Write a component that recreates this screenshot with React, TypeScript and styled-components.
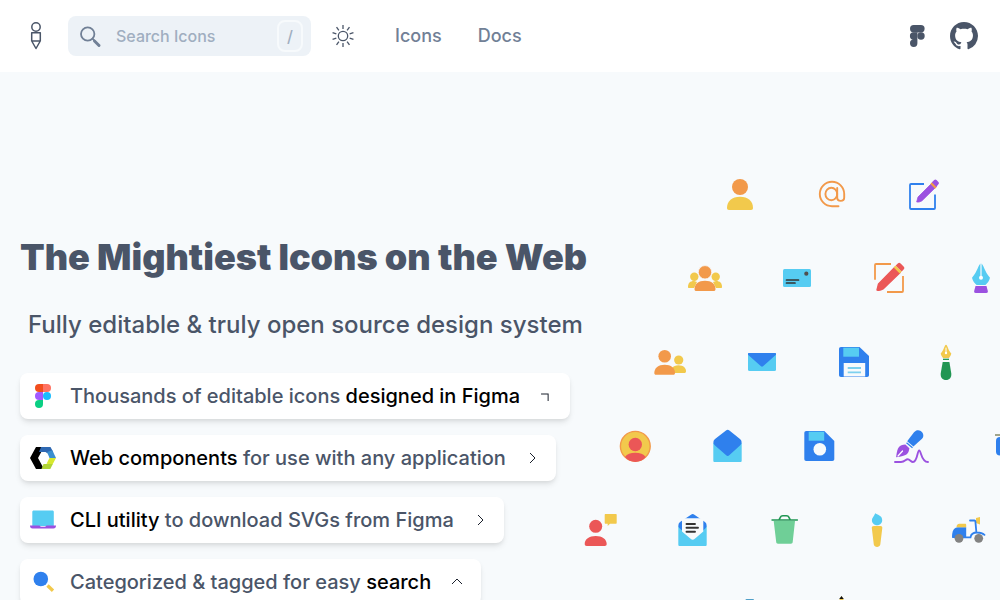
import React from "react";
import styled, { createGlobalStyle } from "styled-components";
import { BsGithub } from "react-icons/bs";

const GlobalStyle = createGlobalStyle`
  *, *::before, *::after { box-sizing: border-box; }
  html { scrollbar-width: none; }
  body {
    margin: 0;
    background: #f7fafc;
    color: #4a5568;
    font-family: Inter, "Liberation Sans", sans-serif;
    font-weight: 500;
  }
`;

const Page = styled.div`
  min-height: 100vh;
  overflow-x: clip;
`;

const Header = styled.header`
  display: flex;
  align-items: center;
  height: 72px;
  padding: 0 22px 0 20px;
  background: #fff;
`;

const IconLink = styled.a`
  display: flex;
  color: #4a5568;
`;

const SearchBox = styled.label`
  display: flex;
  align-items: center;
  width: 243px;
  height: 40px;
  margin-left: 16px;
  padding: 0 8px 0 10px;
  border-radius: 8px;
  background: #edf2f7;
  color: #718096;
`;

const SearchInput = styled.input`
  flex: 1;
  min-width: 0;
  margin-left: 12px;
  padding: 0;
  border: 0;
  outline: 0;
  background: transparent;
  color: #4a5568;
  font: 500 16px/24px Inter, "Liberation Sans", sans-serif;
  &::placeholder { color: #a0aec0; opacity: 1; }
`;

const Key = styled.kbd`
  display: flex;
  align-items: center;
  justify-content: center;
  width: 26px;
  height: 32px;
  border: 2px solid #f7fafc;
  border-radius: 8px;
  color: #a0aec0;
  font: 500 16px/24px Inter, "Liberation Sans", sans-serif;
`;

const ThemeButton = styled.button`
  display: flex;
  margin: 0 0 0 20px;
  padding: 0;
  border: 0;
  background: none;
  color: #4a5568;
  cursor: pointer;
`;

const Nav = styled.nav`
  display: flex;
  gap: 36px;
  margin-left: 40px;
`;

const NavLink = styled.a`
  color: #718096;
  font-size: 18px;
  line-height: 28px;
  text-decoration: none;
`;

const Social = styled.div`
  display: flex;
  align-items: center;
  gap: 20px;
  margin-left: auto;
`;

const Main = styled.main`
  display: flex;
  align-items: flex-start;
`;

const Hero = styled.section`
  flex: 0 0 562px;
  min-width: 0;
  padding: 165px 0 40px;
  margin-left: 20px;
  white-space: nowrap;
`;

const Title = styled.h1`
  margin: 0;
  font-size: 36px;
  font-weight: 900;
  line-height: 40px;
`;

const Subtitle = styled.p`
  margin: 32px 0;
  padding-left: 8px;
  font-size: 24px;
  line-height: 32px;
`;

const Features = styled.ul`
  display: flex;
  flex-direction: column;
  align-items: flex-start;
  gap: 16px;
  margin: 0;
  padding: 0;
  list-style: none;
`;

const Feature = styled.a`
  display: flex;
  align-items: center;
  gap: 14px;
  height: 46px;
  padding: 0 12px 0 10px;
  border-radius: 8px;
  background: #fff;
  box-shadow: 0 4px 6px -1px rgba(0, 0, 0, 0.1), 0 2px 4px -1px rgba(0, 0, 0, 0.06);
  color: #4a5568;
  font-size: 20px;
  line-height: 28px;
  text-decoration: none;
`;

const Strong = styled.strong`
  color: #000;
  font-weight: 500;
`;

const Chevron = styled.svg<{ $turn: number }>`
  transform: rotate(${(p) => p.$turn}deg);
`;

const Wall = styled.section`
  display: flex;
  flex: 1;
  flex-direction: column;
  gap: 48px;
  min-width: 0;
  padding-top: 104px;
`;

const WallRow = styled.div<{ $indent: number }>`
  display: flex;
  gap: 56px;
  padding-left: ${(p) => p.$indent}px;
`;

const Glyph = styled.svg`
  flex: none;
  width: 36px;
  height: 36px;
  overflow: visible;
`;

const orange = "#f2994a";
const yellow = "#f2c94c";
const red = "#eb5757";
const blue = "#2f80ed";
const sky = "#56ccf2";
const purple = "#9b51e0";

const wall: { indent: number; icons: React.ReactNode[] }[] = [
  {
    indent: 140,
    icons: [
      <>
        <circle cx="18" cy="11" r="8" fill={orange} />
        <path d="M5 32c0-7 5-11.300 13-11.300S31 25 31 32c0 1.300-.7 2-2 2H7c-1.300 0-2-.7-2-2z" fill={yellow} />
      </>,
      <g fill="none" stroke={orange} strokeWidth="1.900" strokeLinecap="round">
        <path d="M24.500 30.200H18A12.200 12.200 0 1 1 30.200 18v3.500c0 4.500-7 4.500-7 0V12" />
        <ellipse cx="17.300" cy="18" rx="5.900" ry="6.300" />
      </g>,
      <>
        <path d="M18 8H5c-.7 0-1 .3-1 1v23c0 .7.3 1 1 1h23c.7 0 1-.3 1-1V18.500" fill="none" stroke={blue} strokeWidth="1.800" />
        <path d="M10.700 26l1.300-5L26.500 6.500l4 4L16 24.700c-2 1.300-3.500 1.500-5.300 1.300z" fill={purple} stroke={purple} strokeWidth=".8" strokeLinejoin="round" />
        <path d="M24.300 7.900l4.800 4.800 1.600-1.600-4.800-4.800z" fill={orange} />
        <path d="M25.900 6.300l2.300-2.300c.9-.9 1.700-.6 2.300 0l1.900 1.900c.7.7.7 1.600 0 2.300l-2 2.600z" fill={purple} />
      </>,
    ],
  },
  {
    indent: 105,
    icons: [
      <>
        <g fill={yellow}>
          <circle cx="7.300" cy="16.700" r="4.200" />
          <circle cx="28.700" cy="16.700" r="4.200" />
          <path d="M1 27c0-4 2-6 6-6l3 1-3 6H2c-.7 0-1-.3-1-1zM35 27c0-4-2-6-6-6l-3 1 3 6h5c.7 0 1-.3 1-1z" />
        </g>
        <circle cx="18" cy="12.300" r="6.700" fill={orange} stroke="#f7fafc" strokeWidth=".8" />
        <path d="M7.500 29c0-5 4-8.300 10.500-8.300S28.500 24 28.500 29c0 1.400-.6 2-2 2h-17c-1.400 0-2-.6-2-2z" fill={orange} />
      </>,
      <>
        <rect x="4" y="9" width="28" height="18" rx="1.500" fill={sky} />
        <circle cx="27.300" cy="13.700" r="2.100" fill="#4f4f4f" />
        <path d="M7.500 20h12M7.500 23h8.500" stroke="#333" strokeWidth="1.700" strokeLinecap="round" />
      </>,
      <>
        <path d="M4 19.700V5c0-.7.3-1 1-1h15M32 16v15c0 .7-.3 1-1 1H16" fill="none" stroke={orange} strokeWidth="1.800" />
        <path d="M6 30l1.500-6L23.900 7.200l5.200 5.200-17.100 16.600c-2.200 1.300-4 1.500-6 1z" fill={red} stroke={red} strokeWidth="1.400" strokeLinejoin="round" />
        <path d="M22.700 7.600l6 6 2-2-6-6z" fill={yellow} />
        <path d="M24.700 5.600l2.100-2.100c1-1 1.800-1 2.800 0l3 3c1 1 1 1.900 0 2.900l-1.900 2.200z" fill={red} />
      </>,
      <>
        <path d="M18 3.700c2.600 0 3.300 7.800 9 14-.8 3.300-2.500 5.300-4.600 7.300h-8.800c-2.100-2-3.800-4-4.600-7.300 5.700-6.200 6.400-14 9-14z" fill={sky} />
        <path d="M18 4v13" stroke="#f7fafc" strokeWidth="1.200" />
        <circle cx="18" cy="17.700" r="2" fill="#fff" />
        <path d="M12.500 26h11l1.300 5c.3 1.300-.3 2-1.500 2H12.700c-1.200 0-1.800-.7-1.500-2z" fill={purple} />
      </>,
    ],
  },
  {
    indent: 70,
    icons: [
      <>
        <circle cx="26.700" cy="16" r="4.600" fill={yellow} />
        <path d="M20 29v-5c1.500-2 3.500-2.800 6.500-2.800 5 0 7.500 2.800 7.500 6 0 1.200-.6 1.800-1.800 1.800z" fill={yellow} />
        <circle cx="12.700" cy="12.300" r="6.300" fill={orange} />
        <path d="M2.300 29c0-5 4-8.300 10.400-8.300S23 24 23 29c0 1.200-.6 1.800-1.800 1.800H4.100c-1.200 0-1.800-.6-1.800-1.800z" fill={orange} />
      </>,
      <>
        <rect x="4" y="9" width="28" height="18" rx="1.500" fill={sky} />
        <path d="M4 10c0-.6.4-1 1-1h26c.6 0 1 .4 1 1v.8L19 22.200c-.7.6-1.300.6-2 0L4 10.800z" fill={blue} />
      </>,
      <>
        <path d="M5 3h18.500L33 12v19c0 1.300-.7 2-2 2H5c-1.300 0-2-.7-2-2V5c0-1.300.7-2 2-2z" fill={blue} />
        <rect x="7.300" y="3.700" width="15.700" height="9" fill={sky} />
        <rect x="7.700" y="19" width="21.500" height="13.500" fill="#f7fafc" />
        <path d="M11.700 24H25M11.700 28.300H25" stroke="#7dd0ee" strokeWidth="1.800" />
      </>,
      <>
        <path d="M18 .7c1.500 0 1.700 4.600 5.300 8.800-.2 2-1.500 3-2.300 4.500h-6c-.8-1.500-2.100-2.500-2.300-4.500C16.300 5.300 16.500.7 18 .7z" fill={yellow} />
        <path d="M18 4v5" stroke="#fff" strokeWidth="1" strokeLinecap="round" />
        <circle cx="18" cy="9" r="1.200" fill="#fff" />
        <path d="M15 15.300h6" stroke="#219653" strokeWidth="1.300" />
        <path d="M14.700 18h6.700l1.900 11.500v1.300c0 7-10.600 7-10.600 0v-1.300z" fill="#219653" />
      </>,
    ],
  },
  {
    indent: 35,
    icons: [
      <>
        <circle cx="18.300" cy="18.300" r="14.900" fill={yellow} stroke={orange} strokeWidth="1.400" />
        <circle cx="18.300" cy="16.500" r="6.700" fill={red} />
        <path d="M8 29c2-3 5.500-4.300 10.300-4.300S26.600 26 28.700 29c-5.700 6.500-15 6.500-20.700 0z" fill={red} />
      </>,
      <>
        <path d="M4.300 15h28.400v17.500c0 1-.5 1.500-1.500 1.500H5.800c-1 0-1.500-.5-1.500-1.500z" fill={sky} />
        <path d="M17 2.500c1.200-.9 2.200-.9 3.400 0L31 11c2.200 1.800 2.200 4.600 0 6.400L20.500 27c-1.200 1.200-2.400 1.200-3.600 0L6 17.400c-2.200-1.800-2.200-4.600 0-6.400z" fill={blue} />
      </>,
      <>
        <path d="M5.300 3h18L33.300 13v18c0 1.300-.7 2-2 2h-26c-1.300 0-2-.7-2-2V5c0-1.300.7-2 2-2z" fill={blue} />
        <rect x="7.700" y="3.700" width="15.500" height="9" fill={sky} />
        <circle cx="18.800" cy="21.300" r="6.300" fill="#f7fafc" />
      </>,
      <>
        <path d="M14.200 13.200L21 4.300c4.500-5.700 12.500 1.200 8 6.500l-8.600 7.800z" fill={blue} />
        <path d="M13.500 14.800l6 5" stroke={blue} strokeWidth="1.300" />
        <path d="M12.400 16.500l4 3.700c-1 6-2.400 7.500-13.300 9 1.200-10.500 3-12 9.300-12.700z" fill={purple} />
        <path d="M5 28l4.500-5" stroke="#fff" strokeWidth="1.200" strokeLinecap="round" />
        <path d="M2 34h6c4 0 4.500-2.700 6.700-2.700S18 34 20 34c4.500 0 4.200-11.500 6.200-11.500S28 34 35 34" fill="none" stroke={purple} strokeWidth="1.900" strokeLinecap="round" />
      </>,
      <>
        <path d="M10 7h20" stroke="#8a8f70" strokeWidth="1.600" />
        <rect x="11" y="9" width="20" height="18.500" rx="4" fill={blue} />
      </>,
    ],
  },
  {
    indent: 0,
    icons: [
      <>
        <circle cx="13.700" cy="14.300" r="6.500" fill={red} />
        <path d="M2.700 32c0-5 4.500-8 11-8s11 3 11 8c0 1.300-.7 2-2 2h-18c-1.300 0-2-.7-2-2z" fill={red} />
        <path d="M23.700 2h10c.7 0 1 .3 1 1v7.700c0 .7-.3 1-1 1H28l-2.300 2.200v-2.200h-2c-.7 0-1-.3-1-1V3c0-.7.3-1 1-1z" fill={yellow} />
      </>,
      <>
        <path d="M4.300 14h28.400v18.500c0 1-.5 1.500-1.500 1.500H5.800c-1 0-1.500-.5-1.500-1.500z" fill={sky} />
        <path d="M17 2.700c1.200-.9 2.200-.9 3.400 0L31 10c2.200 1.800 2.200 5 0 6.800L19 27 6 16.800c-2.200-1.800-2.200-5 0-6.800z" fill={blue} />
        <path d="M8 8c0-1.200.6-1.800 1.800-1.800h17.700c1.200 0 1.800.6 1.800 1.800v11.500l-8.500 7.300c-1.500 1.300-2.700 1.300-4.200 0L8 19.500z" fill="#f7fafc" />
        <path d="M12.500 12h8.500M12.500 15.800H24M12.500 19.800H21" stroke="#333" strokeWidth="1.900" strokeLinecap="round" />
      </>,
      <>
        <path d="M7.700 9H29l-2.300 21c-.1 1.200-.7 1.700-1.800 1.700H12c-1.100 0-1.700-.5-1.800-1.700z" fill="#6fcf97" />
        <path d="M5.500 8h26.400M13 8c2-4 2-4.300 4-4.300h3.300c2 0 2 .3 4 4.300" fill="none" stroke="#219653" strokeWidth="1.600" />
      </>,
      <>
        <path d="M17.200 1.300C19 3 24.200 3 24.200 8.200c0 2.700-2.200 5-5.100 5s-5.200-2.200-5.200-5c0-2.500 2.300-3.600 3.300-6.900z" fill={sky} />
        <path d="M16 14h6.500c1.300 0 2 .7 1.800 2l-2 16.500c-.5 3.300-6 3.300-6.500 0l-2-16.500c-.2-1.300.6-2 2.200-2z" fill={yellow} />
      </>,
      <>
        <path d="M2 25c0-6 2-9.700 6-9.700h8.200V26H3c-.7 0-1-.3-1-1z" fill={blue} />
        <path d="M6.500 15.300c0-2.400 1-3.600 3-3.600H15c.8 0 1.200.4 1.200 1.200v2.400zM26 6l4-1v7.500l-4-1.500z" fill={yellow} />
        <path d="M20 8.500h4.500c.6 0 .8.300.9.900l1 11.300M14 25.300h6.500c.5-3 3-4.800 6.500-4.800 3 0 5.500.5 7.500 2.300" fill="none" stroke={blue} strokeWidth="1.800" strokeLinecap="round" />
        <circle cx="9" cy="26.300" r="4.400" fill="#828282" />
        <circle cx="28.700" cy="26.300" r="4.400" fill="#828282" />
      </>,
    ],
  },
  {
    indent: 149,
    icons: [
      <rect x="14.500" y="3" width="8.500" height="29" rx="1" fill="#4f9fc8" />,
      <>
        <path d="M18.500 0L23 8v24h-9V8z" fill={yellow} />
        <path d="M18.500 0l2.300 3h-4.600z" fill="#111" />
      </>,
    ],
  },
];

const FigmaColor = () => (
  <svg width="26" height="24" viewBox="-5 0 26 24">
    <path d="M8 0H4a4 4 0 0 0 0 8h4z" fill="#f24e1e" />
    <path d="M8 0h4a4 4 0 0 1 0 8H8z" fill="#ff7262" />
    <path d="M8 8H4a4 4 0 0 0 0 8h4z" fill="#a259ff" />
    <circle cx="12" cy="12" r="4" fill="#1abcfe" />
    <path d="M8 16H4a4 4 0 1 0 4 4z" fill="#0acf83" />
  </svg>
);

const WebComponents = () => (
  <svg width="26" height="22" viewBox="0 0 26 22">
    <path d="M6 0h8L8 11l6 11H6L0 11z" fill="#000" />
    <path d="M11 0h9.500l2.800 5.200-6 1L15.500 5H9z" fill="#2e68b2" />
    <path d="M17 5l5.300-1.800L26 11h-6.500z" fill="#3a8fd0" />
    <path d="M19.500 11H26l-3.500 6.500-6-.7z" fill="#d7e82e" />
    <path d="M15.500 17h7.300l-2.500 5H11.500l2-5z" fill="#b0d437" />
  </svg>
);

const Laptop = () => (
  <svg width="26" height="20" viewBox="0 0 26 20">
    <path d="M2.300 2c0-1 .5-1.500 1.500-1.500h18.500c1 0 1.500.5 1.500 1.500v14H2.300z" fill={sky} />
    <path d="M0 15.500h9.500c.5 1 1 1.300 3.500 1.300s3-.3 3.500-1.300H26c0 2-.8 3-2.600 3H2.600c-1.800 0-2.600-1-2.600-3z" fill={purple} />
  </svg>
);

const Lens = () => (
  <svg width="26" height="22" viewBox="0 0 26 22">
    <circle cx="10.800" cy="8" r="7.300" fill={blue} />
    <path d="M17.500 14.500l5.500 5.300" stroke={yellow} strokeWidth="3.300" />
  </svg>
);

const features = [
  { icon: <FigmaColor />, turn: -45, text: <>Thousands of editable icons <Strong>designed in Figma</Strong></> },
  { icon: <WebComponents />, turn: 0, text: <><Strong>Web components</Strong> for use with any application</> },
  { icon: <Laptop />, turn: 0, text: <><Strong>CLI utility</Strong> to download SVGs from Figma</> },
  { icon: <Lens />, turn: -90, text: <>Categorized &amp; tagged for easy <Strong>search</Strong></> },
];

export default function App() {
  return (
    <Page>
      <GlobalStyle />
      <Header>
        <IconLink href="#home" aria-label="Home">
          <svg width="32" height="32" viewBox="0 0 32 32" fill="none" stroke="currentColor" strokeWidth="1.500" strokeLinejoin="round">
            <circle cx="16" cy="7" r="4.200" />
            <path d="M11.700 12.700h8.600v8.300h-8.600zM11.700 21L16 28.500l4.300-7.500" />
          </svg>
        </IconLink>
        <SearchBox>
          <svg width="26" height="26" viewBox="0 0 26 26" fill="none" stroke="currentColor" strokeLinecap="round">
            <circle cx="9.700" cy="11" r="6.700" strokeWidth="1.800" />
            <path d="M14.500 15.700l2 2" strokeWidth="1.800" />
            <path d="M16.500 18l4.500 4.500" strokeWidth="3" />
          </svg>
          <SearchInput type="text" placeholder="Search Icons" aria-label="Search Icons" />
          <Key>/</Key>
        </SearchBox>
        <ThemeButton aria-label="Toggle theme">
          <svg width="24" height="24" viewBox="-12 -12 24 24" fill="none" stroke="currentColor" strokeWidth="1.300">
            <circle r="4.700" />
            {[0, 36, 72, 108, 144, 180, 216, 252, 288, 324].map((a) => (
              <path key={a} d="M0-7v-4" transform={`rotate(${a})`} />
            ))}
          </svg>
        </ThemeButton>
        <Nav>
          <NavLink href="#icons">Icons</NavLink>
          <NavLink href="#docs">Docs</NavLink>
        </Nav>
        <Social>
          <IconLink href="#figma" aria-label="Figma">
            <svg width="24" height="22" viewBox="-4 0 24 22" fill="currentColor">
              <rect width="14.600" height="7.400" rx="3.700" />
              <path d="M3.600 7.300h3.800v7.400H3.600a3.700 3.700 0 0 1 0-7.400zM3.600 14.600h3.800v3.700a3.700 3.700 0 1 1-3.800-3.700z" />
              <circle cx="11" cy="11" r="3.700" />
            </svg>
          </IconLink>
          <IconLink href="#github" aria-label="GitHub">
            <BsGithub size={28} />
          </IconLink>
        </Social>
      </Header>
      <Main>
        <Hero>
          <Title>The Mightiest Icons on the Web</Title>
          <Subtitle>Fully editable &amp; truly open source design system</Subtitle>
          <Features>
            {features.map((f, i) => (
              <li key={i}>
                <Feature href="#feature">
                  {f.icon}
                  <span>{f.text}</span>
                  <Chevron $turn={f.turn} width="24" height="24" viewBox="0 0 24 24" fill="none" stroke="#1a202c" strokeWidth="1">
                    <path d="M10 7l5 5-5 5" />
                  </Chevron>
                </Feature>
              </li>
            ))}
          </Features>
        </Hero>
        <Wall aria-hidden="true">
          {wall.map((row, r) => (
            <WallRow key={r} $indent={row.indent}>
              {row.icons.map((icon, i) => (
                <Glyph key={i} viewBox="0 0 36 36">{icon}</Glyph>
              ))}
            </WallRow>
          ))}
        </Wall>
      </Main>
    </Page>
  );
}
